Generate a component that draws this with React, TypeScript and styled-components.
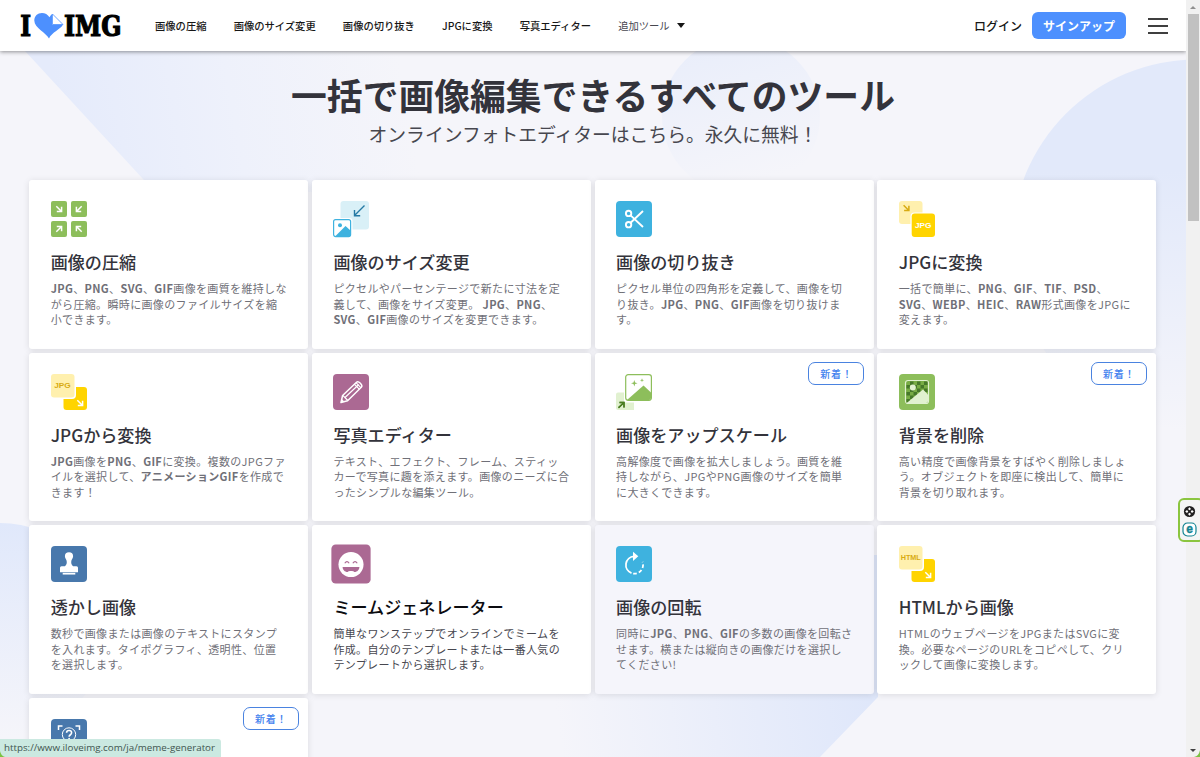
import React from "react";
import styled, { createGlobalStyle, css } from "styled-components";

const Global = createGlobalStyle`
  * { box-sizing: border-box; }
  html, body { margin: 0; height: 100%; overflow: hidden; }
  body {
    font-family: "Noto Sans CJK JP", "Noto Sans", sans-serif;
    color: #33333b;
    background: #f4f4fa;
  }
`;

const Window = styled.div`
  position: relative;
  display: flex;
  width: 1200px;
  height: 757px;
  overflow: hidden;
`;

const Page = styled.div`
  position: relative;
  display: flex;
  flex-direction: column;
  width: 1186px;
  height: 757px;
  overflow: hidden;
  background: #f5f5fa;
`;

const Backdrop = styled.svg`
  position: absolute;
  inset: 0;
`;

const Header = styled.header`
  position: relative;
  flex: none;
  display: flex;
  align-items: center;
  height: 51px;
  padding: 0 18px 0 20px;
  background: #fff;
  box-shadow: 0 1px 4px rgba(0, 0, 0, 0.42);
`;

const Logo = styled.svg`
  flex: none;
  display: block;
  overflow: visible;
`;

const Nav = styled.nav`
  display: flex;
  align-items: center;
  gap: 27.15px;
  margin-left: 33px;
  flex: 1;
`;

const NavLink = styled.a<{ $muted?: boolean }>`
  display: flex;
  align-items: center;
  gap: 7px;
  font-size: 10.3px;
  font-weight: 500;
  line-height: 16px;
  white-space: nowrap;
  color: ${(p) => (p.$muted ? "#47474f" : "#161616")};
  ${(p) => p.$muted && css`font-weight: 400;`}
`;

const Caret = styled.span`
  border: 4px solid transparent;
  border-top: 5px solid #161616;
  border-bottom: 0;
`;

const Login = styled.a`
  font-size: 12px;
  line-height: 18px;
  font-weight: 500;
  color: #161616;
`;

const SignUp = styled.button`
  width: 94px;
  height: 27px;
  margin: 0 22px 0 10px;
  padding: 0;
  border: 0;
  border-radius: 6px;
  background: #4d90fe;
  color: #fff;
  font: 700 12px/27px "Noto Sans CJK JP", sans-serif;
`;

const Burger = styled.svg`
  display: block;
  width: 20px;
  height: 16px;
`;

const Hero = styled.section`
  position: relative;
  flex: none;
  height: 129px;
  padding-top: 17px;
  text-align: center;
`;

const Title = styled.h1`
  margin: 0;
  font-size: 35.8px;
  font-weight: 600;
  line-height: 52px;
  color: #33333b;
`;

const Subtitle = styled.p`
  margin: 1px 0 0;
  font-size: 18.8px;
  line-height: 26px;
  color: #47474f;
`;

const Grid = styled.main`
  position: relative;
  flex: none;
  display: grid;
  grid-template-columns: repeat(4, 279px);
  grid-auto-rows: 168.9px;
  column-gap: 3.7px;
  row-gap: 3.7px;
  padding-left: 29.3px;
`;

const Card = styled.article<{ $shade?: boolean }>`
  position: relative;
  padding: 21px 21px 0 21.4px;
  border-radius: 3px;
  background: ${(p) => (p.$shade ? "#f5f5fb" : "#fff")};
  box-shadow: 0 1px 7px rgba(0, 0, 0, 0.11);
`;

const Icon = styled.svg<{ $grown?: boolean }>`
  display: block;
  width: 36px;
  height: 36px;
  overflow: visible;
  ${(p) => p.$grown && css`transform: scale(1.09);`}
`;

const CardTitle = styled.h3<{ $active?: boolean }>`
  margin: 13px 0 7.200px;
  font-size: 17.1px;
  line-height: 24px;
  font-weight: 500;
  white-space: nowrap;
  color: ${(p) => (p.$active ? "#0c0c10" : "#33333b")};
`;

const Text = styled.p<{ $active?: boolean }>`
  margin: 0;
  font-size: 11px;
  letter-spacing: 0.35px;
  line-height: 15.5px;
  white-space: pre;
  color: ${(p) => (p.$active ? "#47474f" : "#707078")};
  b { font-weight: 700; }
`;

const Badge = styled.span`
  position: absolute;
  top: 9px;
  right: 9.400px;
  width: 56px;
  height: 23px;
  border: 1px solid #4a83e0;
  border-radius: 7px;
  padding-left: 11px;
  font-size: 10px;
  line-height: 21px;
  letter-spacing: 0.8px;
  font-weight: 500;
  color: #4080ee;
  background: #fff;
`;

const Scrollbar = styled.aside`
  display: flex;
  flex-direction: column;
  align-items: center;
  width: 14px;
  height: 757px;
  background: #f1f1f1;
`;

const Arrow = styled.span<{ $down?: boolean }>`
  margin: ${(p) => (p.$down ? "auto 0 5px" : "6px 0 5px")};
  border: 3px solid transparent;
  ${(p) =>
    p.$down
      ? css`border-top: 3px solid #404040; border-bottom: 0;`
      : css`border-bottom: 3px solid #909090; border-top: 0;`}
`;

const Thumb = styled.span`
  width: 11px;
  height: 207px;
  background: #c1c1c1;
`;

const StatusBar = styled.div`
  position: absolute;
  left: 0;
  bottom: 0;
  width: 221px;
  height: 18px;
  padding-left: 4px;
  border-radius: 0 3px 0 0;
  background: #cbe9e1;
  color: #3f5550;
  font: 9.78px/18px "Open Sans", sans-serif;
  white-space: nowrap;
`;

const SideWidget = styled.div`
  position: absolute;
  right: -4px;
  top: 498px;
  width: 26px;
  height: 44px;
  border: 2px solid #8bc53f;
  border-radius: 6px;
  background: #f4f5f5;
  display: flex;
  flex-direction: column;
  gap: 3px;
  padding: 4px 0 0 2px;
`;

const Corners = styled.svg`
  position: absolute;
  left: 0;
  bottom: 0;
`;

const Diag = ({ x, y, r, c, s = 1 }: { x: number; y: number; r: number; c: string; s?: number }) => (
  <path
    d="M-2.7-2.7 2.3 2.3M2.6-2.2V2.6H-2.2"
    transform={`translate(${x} ${y}) rotate(${r}) scale(${s})`}
    stroke={c}
    strokeWidth="1.5"
    fill="none"
  />
);

const Label = ({ x, y, w, c, children }: { x: number; y: number; w: number; c: string; children: string }) => (
  <text
    x={x}
    y={y}
    fill={c}
    fontFamily="Liberation Sans, sans-serif"
    fontWeight="700"
    fontSize={children.length > 3 ? 6.8 : 8}
    textLength={w}
    lengthAdjust="spacingAndGlyphs"
  >
    {children}
  </text>
);

const FromIcon = ({ label }: { label: string }) => (
  <>
    <rect x="12.5" y="13" width="23.5" height="23" rx="3" fill="#ffd400" />
    <rect x="-1" y="-1" width="26" height="26" rx="4" fill="#fff" />
    <rect width="23.5" height="23.5" rx="3" fill="#fff0ae" />
    {label.length > 3 ? (
      <Label x={1.7} y={13.8} w={20} c="#d8ab12">{label}</Label>
    ) : (
      <Label x={3.2} y={14.4} w={16.5} c="#d8ab12">{label}</Label>
    )}
    <Diag x={29} y={29} r={0} c="#fff" />
  </>
);

const icons: Record<string, React.ReactNode> = {
  compress: (
    <g>
      {[[0, 0, 0], [20, 0, 90], [0, 20, -90], [20, 20, 180]].map(([x, y, r]) => (
        <g key={`${x}-${y}`}>
          <rect x={x} y={y} width="16" height="16" rx="2" fill="#8dbe5b" />
          <Diag x={x + 8} y={y + 8} r={r} c="#fff" />
        </g>
      ))}
    </g>
  ),
  resize: (
    <g>
      <rect x="7.5" width="28.5" height="28.5" rx="3" fill="#d9f0f7" />
      <path d="M31.5 4.5 22 14M21.5 9v5.700h5.700" stroke="#2579a4" strokeWidth="1.4" fill="none" />
      <rect x="-1" y="17" width="20.5" height="20.5" rx="3" fill="#fff" />
      <rect x=".6" y="18.6" width="17" height="17" rx="2" fill="#fff" stroke="#3eb2df" strokeWidth="1.2" />
      <circle cx="7" cy="24.2" r="2" fill="#3eb2df" />
      <path d="M2.5 35 12.5 25 17.5 29.5V35Z" fill="#3eb2df" />
    </g>
  ),
  crop: (
    <g>
      <rect width="36" height="36" rx="4" fill="#3eb2df" />
      <g fill="none" stroke="#fff" strokeWidth="1.9">
        <circle cx="12.6" cy="12.4" r="2.7" />
        <circle cx="12.6" cy="23.700" r="2.7" />
        <path d="M14.6 14.4 27 26M14.6 21.700 27 10" />
      </g>
    </g>
  ),
  toJpg: (
    <g>
      <rect width="23.5" height="23" rx="3" fill="#fff0ae" />
      <Diag x={7.3} y={7} r={0} c="#d8ab12" />
      <rect x="11.5" y="11.5" width="26" height="26" rx="4" fill="#fff" />
      <rect x="12.7" y="12.5" width="23.3" height="23.5" rx="3" fill="#ffd400" />
      <Label x={16} y={27} w={16.5} c="#fff">JPG</Label>
    </g>
  ),
  fromJpg: <FromIcon label="JPG" />,
  fromHtml: <FromIcon label="HTML" />,
  editor: (
    <g>
      <rect width="36" height="36" rx="4" fill="#ab6993" />
      <g fill="none" stroke="#fff" strokeWidth="1.5" strokeLinejoin="round">
        <path d="M8 28.5 9.6 21.5 23.5 8.2c1.8-1.8 6.9 2.7 4.8 5.1L14.6 26.8Z" />
        <path d="M9.8 21.3 14.8 26.5M12 23.5 25.8 10.5M21.3 10.2 26.5 15.4M23 8.6 28 13.8" strokeWidth="1.2" />
      </g>
      <path d="m8 28.5.8-3.4 2.5 2.5Z" fill="#fff" />
    </g>
  ),
  upscale: (
    <g>
      <path d="M2 18.5h6V28.5h10v7.5H2a2 2 0 0 1-2-2V20.5a2 2 0 0 1 2-2Z" fill="#e1f1d0" />
      <path d="M2.5 33.5 8 28.5M3.5 28.5H8v5" stroke="#4a7d22" strokeWidth="1.4" fill="none" />
      <rect x="8" y="-1" width="29" height="29" rx="4" fill="#fff" />
      <rect x="9.7" y=".6" width="25.7" height="25.7" rx="2.5" fill="#fff" stroke="#8dbe5b" strokeWidth="1.2" />
      <path d="M11 26 27.5 11.5 35 18.5V24a2 2 0 0 1-2 2Z" fill="#8dbe5b" />
      <path d="m18.3 6 .8 2.500 2.500.8-2.500.8-.8 2.500-.8-2.500-2.500-.8 2.500-.8ZM26 4.300l.5 1.500 1.500.5-1.500.5-.5 1.500-.5-1.500-1.500-.5 1.500-.5Z" fill="#8dbe5b" />
      <path d="M3.5 28.5H8v5M2.5 34 8 28.5" stroke="#4a7d22" strokeWidth="1.4" fill="none" />
    </g>
  ),
  background: (
    <g>
      <rect width="36" height="36" rx="4" fill="#8dbe5b" />
      <rect x="6.5" y="6.5" width="23" height="23" rx="2.5" fill="#78ac45" stroke="#e1f1d0" strokeWidth="1.2" />
      {Array.from({ length: 36 }, (_, i) => [i % 6, Math.floor(i / 6)])
        .filter(([x, y]) => (x + y) % 2)
        .map(([x, y]) => (
          <rect key={`${x}-${y}`} x={7.5 + x * 3.5} y={7.5 + y * 3.5} width="3.5" height="3.5" fill="#46782a" />
        ))}
      <path d="M8 28.8 24 15.5 29 20.5V27a2 2 0 0 1-2 2H8Z" fill="#e1f1d0" />
      <circle cx="13.8" cy="13.5" r="3" fill="#e1f1d0" />
    </g>
  ),
  watermark: (
    <g>
      <rect width="36" height="36" rx="4" fill="#4878ac" />
      <path
        d="M18 6.2a4.100 4.100 0 0 1 4.100 4.100c0 2.300-1.900 3.200-1.900 5.700 0 2.200.7 3.300 2 4.300h3.300a1.500 1.500 0 0 1 1.500 1.500v4.500H9v-4.500a1.500 1.500 0 0 1 1.500-1.500h3.300c1.300-1 2-2.100 2-4.300 0-2.500-1.900-3.400-1.900-5.700A4.100 4.100 0 0 1 18 6.200Z"
        fill="#fff"
      />
      <path d="M11.7 27.7h12.6" stroke="#fff" strokeWidth="1.7" />
    </g>
  ),
  meme: (
    <g>
      <rect width="36" height="36" rx="4" fill="#ab6993" />
      <circle cx="18" cy="18.5" r="11.5" fill="#fff" />
      <path d="M10.3 20.8h15.4c0 2.500-2 4.600-4.500 4.600h-6.400c-2.500 0-4.500-2.100-4.500-4.600Z" fill="#ab6993" />
      <path d="M15 25.4c.5-1.200 5.500-1.200 6 0Z" fill="#fff" />
      <path d="M12.300 17.3q2-3 4 0M19.700 17.3q2-3 4 0" stroke="#ab6993" strokeWidth="1.1" fill="none" />
    </g>
  ),
  rotate: (
    <g>
      <rect width="36" height="36" rx="4" fill="#3eb2df" />
      <path d="M18 10.3a8.700 8.700 0 0 0-2.500 16.800" stroke="#fff" strokeWidth="1.8" fill="none" />
      <path d="M17.200 27.600a8.700 8.700 0 0 0 9.300-11.700" stroke="#fff" strokeWidth="1.8" strokeDasharray="3.6 2.2" fill="none" />
      <path d="M17 5.8 22.3 10.3 17 15Z" fill="#fff" />
    </g>
  ),
  question: (
    <g>
      <rect width="36" height="36" rx="4" fill="#4878ac" />
      <path d="M7.500 11V7h4M24.500 7h4v4M7.500 25v4h4M28.500 25v4h-4" stroke="#fff" strokeWidth="1.5" fill="none" />
      <circle cx="18" cy="15.5" r="6.7" stroke="#fff" strokeWidth="1" fill="none" />
      <path d="M15.600 13.800c0-3 5-3 5 0 0 2-2.500 1.900-2.500 4" stroke="#fff" strokeWidth="1.6" fill="none" />
      <circle cx="18.1" cy="19.6" r="0.9" fill="#fff" />
    </g>
  ),
};

interface Tool {
  icon: string;
  title: string;
  text: string;
  isNew?: boolean;
  active?: boolean;
  shade?: boolean;
}

const tools: Tool[] = [
  { icon: "compress", title: "画像の圧縮", text: "*JPG*、*PNG*、*SVG*、*GIF*画像を画質を維持しな\nがら圧縮。瞬時に画像のファイルサイズを縮\n小できます。" },
  { icon: "resize", title: "画像のサイズ変更", text: "ピクセルやパーセンテージで新たに寸法を定\n義して、画像をサイズ変更。 *JPG*、*PNG*、\n*SVG*、*GIF*画像のサイズを変更できます。" },
  { icon: "crop", title: "画像の切り抜き", text: "ピクセル単位の四角形を定義して、画像を切\nり抜き。*JPG*、*PNG*、*GIF*画像を切り抜けま\nす。" },
  { icon: "toJpg", title: "JPGに変換", text: "一括で簡単に、*PNG*、*GIF*、*TIF*、*PSD*、\n*SVG*、*WEBP*、*HEIC*、*RAW*形式画像をJPGに\n変えます。" },
  { icon: "fromJpg", title: "JPGから変換", text: "*JPG*画像を*PNG*、*GIF*に変換。複数のJPGファ\nイルを選択して、*アニメーションGIF*を作成で\nきます！" },
  { icon: "editor", title: "写真エディター", text: "テキスト、エフェクト、フレーム、スティッ\nカーで写真に趣を添えます。画像のニーズに合\nったシンプルな編集ツール。" },
  { icon: "upscale", title: "画像をアップスケール", text: "高解像度で画像を拡大しましょう。画質を維\n持しながら、JPGやPNG画像のサイズを簡単\nに大きくできます。", isNew: true },
  { icon: "background", title: "背景を削除", text: "高い精度で画像背景をすばやく削除しましょ\nう。オブジェクトを即座に検出して、簡単に\n背景を切り取れます。", isNew: true },
  { icon: "watermark", title: "透かし画像", text: "数秒で画像または画像のテキストにスタンプ\nを入れます。タイポグラフィ、透明性、位置\nを選択します。" },
  { icon: "meme", title: "ミームジェネレーター", text: "簡単なワンステップでオンラインでミームを\n作成。自分のテンプレートまたは一番人気の\nテンプレートから選択します。", active: true },
  { icon: "rotate", title: "画像の回転", text: "同時に*JPG*、*PNG*、*GIF*の多数の画像を回転さ\nせます。横または縦向きの画像だけを選択し\nてください!", shade: true },
  { icon: "fromHtml", title: "HTMLから画像", text: "HTMLのウェブページをJPGまたはSVGに変\n換。必要なページのURLをコピペして、クリ\nックして画像に変換します。" },
  { icon: "question", title: "", text: "", isNew: true },
];

const rich = (text: string) => text.split("*").map((part, i) => (i % 2 ? <b key={i}>{part}</b> : part));

export default function App() {
  return (
    <Window>
      <Global />
      <Page>
        <Backdrop width="1186" height="757">
          <defs>
            <linearGradient id="beam" gradientUnits="userSpaceOnUse" x1="60" y1="120" x2="400" y2="60">
              <stop offset="0" stopColor="#e5ebfb" />
              <stop offset="0.5" stopColor="#eef1fb" />
              <stop offset="1" stopColor="#f5f5fa" />
            </linearGradient>
            <linearGradient id="ball" x1="0" y1="0" x2="0.3" y2="1">
              <stop offset="0" stopColor="#e8edfa" />
              <stop offset="1" stopColor="#f5f5fa" />
            </linearGradient>
            <linearGradient id="moon" x1="0" y1="0" x2="0" y2="1">
              <stop offset="0.3" stopColor="#e2e9fa" />
              <stop offset="1" stopColor="#f5f5fa" />
            </linearGradient>
            <linearGradient id="left" x1="0" y1="0" x2="0" y2="1">
              <stop offset="0" stopColor="#e0e8fb" />
              <stop offset="1" stopColor="#f5f5fa" />
            </linearGradient>
            <linearGradient id="floor" gradientUnits="userSpaceOnUse" x1="870" y1="700" x2="560" y2="740">
              <stop offset="0" stopColor="#dfe7fa" />
              <stop offset="1" stopColor="#f5f5fa" />
            </linearGradient>
          </defs>
          <path d="M25 51 155 192H460V51Z" fill="url(#beam)" />
          <circle cx="741" cy="116" r="79" fill="url(#ball)" />
          <circle cx="1197" cy="245" r="185.500" fill="url(#moon)" />
          <circle cx="0" cy="630" r="107" fill="url(#left)" />
          <path d="M874 555H878V697L820 757H480V690H874Z" fill="url(#floor)" />
        </Backdrop>
        <Header>
          <Logo width="102" height="28" viewBox="0 0 102 28">
            <g fontFamily="DejaVu Serif, serif" fontWeight="700" fontSize="28" fill="#000" stroke="#000" strokeWidth="1.2">
              <text x="0.200" y="23.800" textLength="10.800" lengthAdjust="spacingAndGlyphs">I</text>
              <text x="44" y="23.800" textLength="57.500" lengthAdjust="spacingAndGlyphs">IMG</text>
            </g>
            <path d="M29 26.500C26.500 21 14.300 16 14.300 8.500 14.300 4 17.500 1 22 1c3 0 5.800 1.500 7.500 4.200.6-1.200 1.500-2.300 2.500-3.200V12.500H43C41 17 31.500 20.500 29 26.500Z" fill="#4d90fe" />
            <path d="M32.500 2V12.500H43Z" fill="#fff" stroke="#4d90fe" strokeWidth="0.8" strokeLinejoin="round" />
          </Logo>
          <Nav>
            <NavLink>画像の圧縮</NavLink>
            <NavLink>画像のサイズ変更</NavLink>
            <NavLink>画像の切り抜き</NavLink>
            <NavLink>JPGに変換</NavLink>
            <NavLink>写真エディター</NavLink>
            <NavLink $muted>
              追加ツール
              <Caret />
            </NavLink>
          </Nav>
          <Login>ログイン</Login>
          <SignUp>サインアップ</SignUp>
          <Burger viewBox="0 0 20 16">
            <path d="M0 1H20M0 8H20M0 15H20" stroke="#000" strokeWidth="1.6" />
          </Burger>
        </Header>
        <Hero>
          <Title>一括で画像編集できるすべてのツール</Title>
          <Subtitle>オンラインフォトエディターはこちら。永久に無料！</Subtitle>
        </Hero>
        <Grid>
          {tools.map((t) => (
            <Card key={t.icon} $shade={t.shade}>
              <Icon viewBox="0 0 36 36" $grown={t.active}>
                {icons[t.icon]}
              </Icon>
              {t.title && <CardTitle $active={t.active}>{t.title}</CardTitle>}
              {t.text && <Text $active={t.active}>{rich(t.text)}</Text>}
              {t.isNew && <Badge>新着！</Badge>}
            </Card>
          ))}
        </Grid>
      </Page>
      <Scrollbar>
        <Arrow />
        <Thumb />
        <Arrow $down />
      </Scrollbar>
      <SideWidget>
        <svg width="15" height="15" viewBox="0 0 15 15">
          <circle cx="7.5" cy="7.5" r="5.600" fill="#222" />
          <path d="M7.500 3.200 9 5 7.500 6.300 6 5ZM7.500 11.800 9 10 7.500 8.700 6 10ZM3.200 7.500 5 6 6.300 7.500 5 9ZM11.800 7.500 10 6 8.700 7.500 10 9Z" fill="#fff" />
        </svg>
        <svg width="15" height="15" viewBox="0 0 15 15">
          <rect x="1" y="1" width="13" height="13" rx="4.5" fill="#fff" stroke="#118391" strokeWidth="1.2" />
          <text x="7.5" y="11.1" textAnchor="middle" fontFamily="Liberation Sans, sans-serif" fontWeight="700" fontSize="12" fill="#118391" stroke="#118391" strokeWidth="0.4">
            e
          </text>
        </svg>
      </SideWidget>
      <StatusBar>https://www.iloveimg.com/ja/meme-generator</StatusBar>
      <Corners width="1200" height="10">
        <path d="M0 4Q1 9 5 10H0ZM1200 3Q1199 9 1194 10H1200Z" fill="#7cc142" />
      </Corners>
    </Window>
  );
}
